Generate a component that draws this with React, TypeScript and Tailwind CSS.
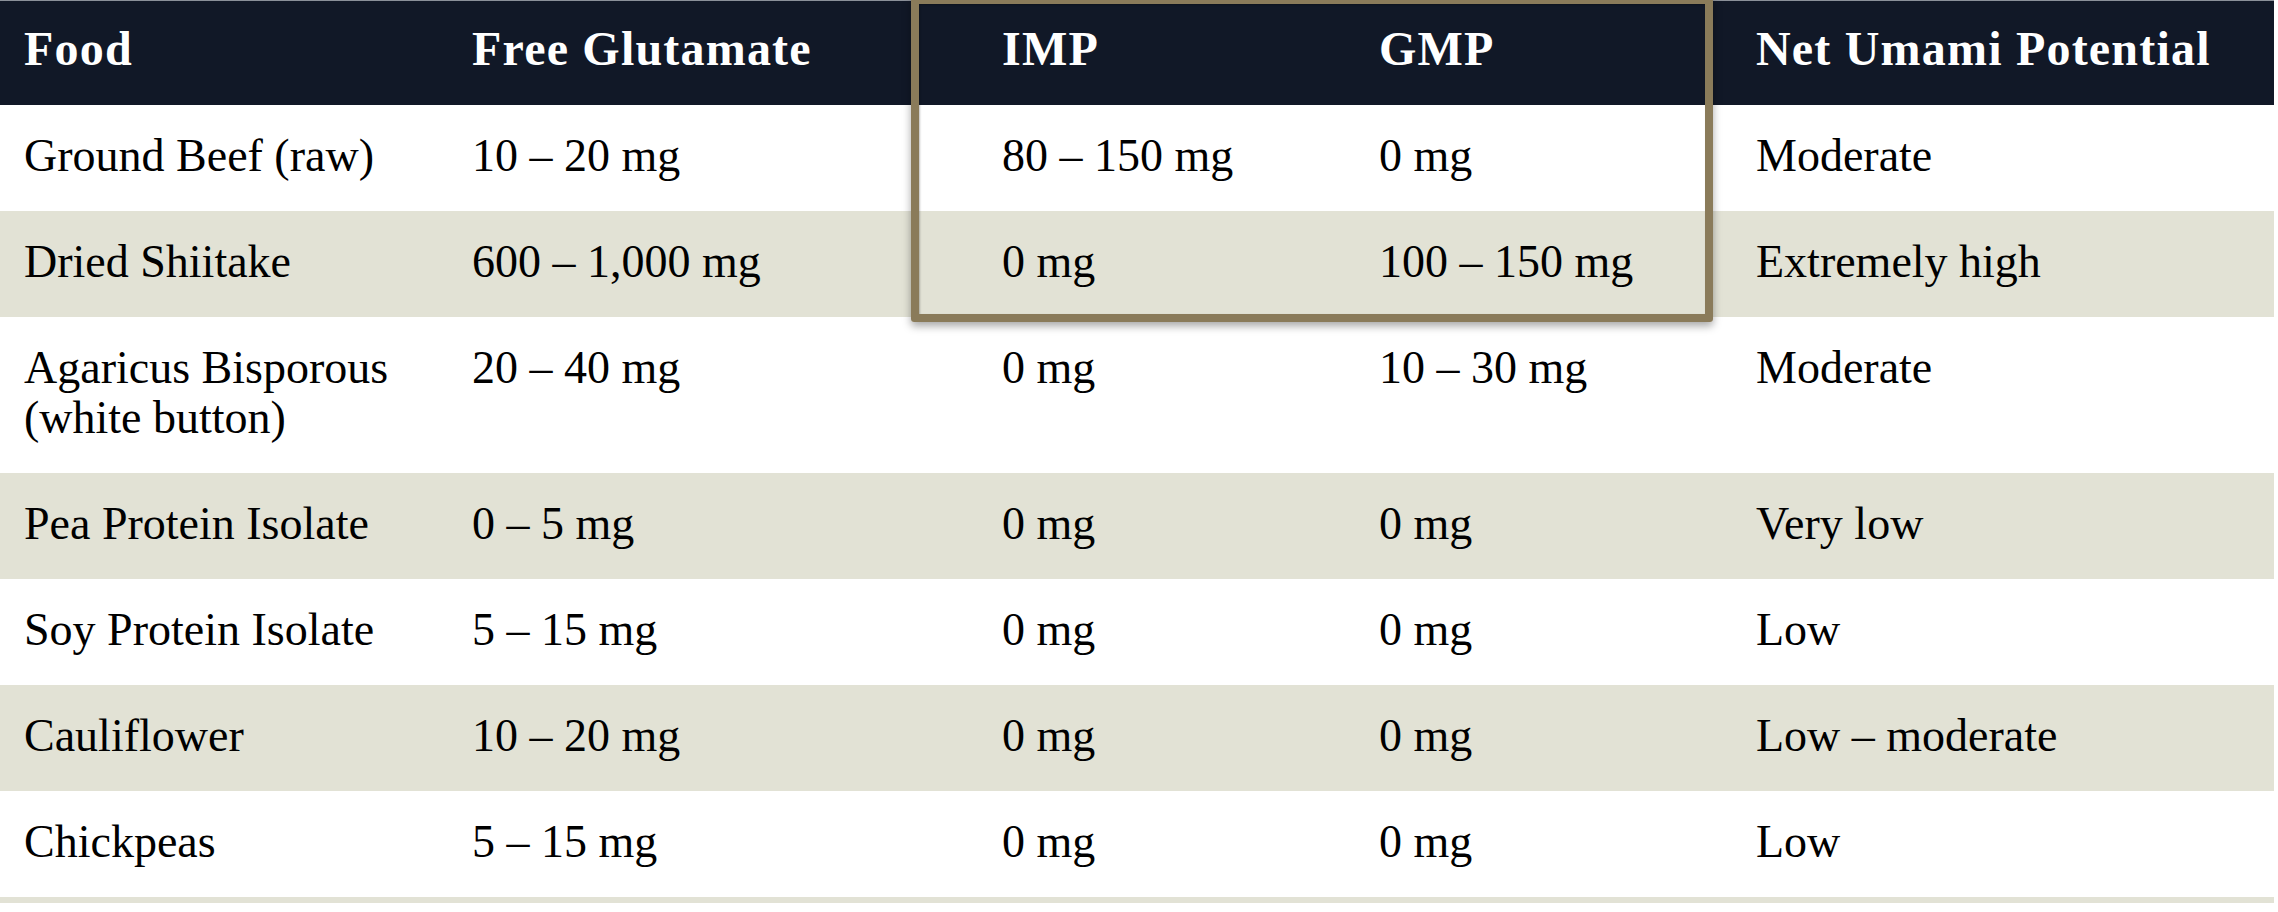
const columns = ['Food', 'Free Glutamate', 'IMP', 'GMP', 'Net Umami Potential'];

const rows: string[][] = [
  ['Ground Beef (raw)', '10 – 20 mg', '80 – 150 mg', '0 mg', 'Moderate'],
  ['Dried Shiitake', '600 – 1,000 mg', '0 mg', '100 – 150 mg', 'Extremely high'],
  ['Agaricus Bisporous (white button)', '20 – 40 mg', '0 mg', '10 – 30 mg', 'Moderate'],
  ['Pea Protein Isolate', '0 – 5 mg', '0 mg', '0 mg', 'Very low'],
  ['Soy Protein Isolate', '5 – 15 mg', '0 mg', '0 mg', 'Low'],
  ['Cauliflower', '10 – 20 mg', '0 mg', '0 mg', 'Low – moderate'],
  ['Chickpeas', '5 – 15 mg', '0 mg', '0 mg', 'Low'],
];

export default function App() {
  return (
    <div className="min-h-[912px] w-[2278px] bg-white font-['Liberation_Serif',serif]">
      <div className="relative w-[2274px]">
        {/* Header */}
        <div className="grid grid-cols-[448px_530px_377px_377px_542px] border-t border-[#8b9099] bg-[#111827] text-white">
          {columns.map(col => (
            <div
              key={col}
              className="pl-6 pr-4 pt-[23px] pb-[31px] text-[48px] leading-[50px] font-bold tracking-[1.2px]"
            >
              {col}
            </div>
          ))}
        </div>

        {/* Body rows */}
        {rows.map((row, i) => (
          <div
            key={row[0]}
            className={`grid grid-cols-[448px_530px_377px_377px_542px] text-black ${
              i % 2 === 1 ? 'bg-[#e2e2d5]' : 'bg-white'
            }`}
          >
            {row.map((cell, j) => (
              <div key={j} className="pl-6 pr-4 pt-[26px] pb-[30px] text-[46px] leading-[50px]">
                {cell}
              </div>
            ))}
          </div>
        ))}
        <div className="h-[6px] bg-[#e2e2d5]" />

        {/* Highlight around IMP / GMP */}
        <div className="pointer-events-none absolute left-[911px] top-[-4px] h-[326px] w-[802px] rounded-[3px] border-[8px] border-[#8a7b5a] shadow-[0_4px_9px_rgba(0,0,0,0.35),inset_1px_1px_2px_rgba(0,0,0,0.25)]" />
      </div>
    </div>
  );
}
